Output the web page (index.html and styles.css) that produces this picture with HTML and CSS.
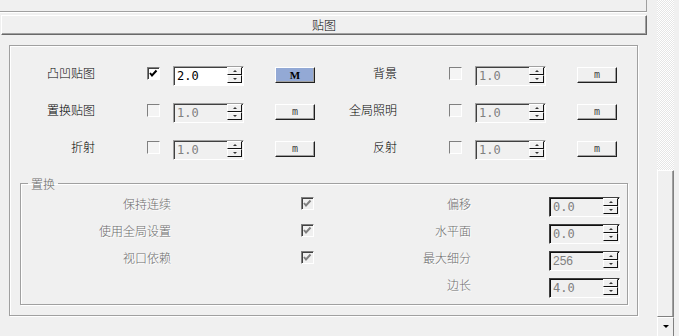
FILE: index.html
```html
<html>
  <head>
    <title>贴图</title>
    <link rel="stylesheet" href="styles.css">
  </head>
  <body>
  <div class="wrap">
    <div class="main">
      <div class="prev"></div>
      <div class="rollout">贴图</div>
      <div class="group">
        <div class="maps">
          <div class="field">
            <span class="lbl">凸凹贴图</span>
            <span class="cb on"><svg width="11" height="11" viewBox="0 0 11 11"><polyline points="2,5 4,7.5 8.5,2.5" fill="none" stroke="#000" stroke-width="2"/></svg></span>
            <span class="spin on"><span class="val">2.0</span><span class="arrows"><i class="up"></i><i class="dn"></i></span></span>
            <span class="mbtn act">M</span>
          </div>
          <div class="field">
            <span class="lbl">背景</span>
            <span class="cb"></span>
            <span class="spin"><span class="val">1.0</span><span class="arrows"><i class="up"></i><i class="dn"></i></span></span>
            <span class="mbtn">m</span>
          </div>
          <div class="field">
            <span class="lbl">置换贴图</span>
            <span class="cb"></span>
            <span class="spin"><span class="val">1.0</span><span class="arrows"><i class="up"></i><i class="dn"></i></span></span>
            <span class="mbtn">m</span>
          </div>
          <div class="field">
            <span class="lbl">全局照明</span>
            <span class="cb"></span>
            <span class="spin"><span class="val">1.0</span><span class="arrows"><i class="up"></i><i class="dn"></i></span></span>
            <span class="mbtn">m</span>
          </div>
          <div class="field">
            <span class="lbl">折射</span>
            <span class="cb"></span>
            <span class="spin"><span class="val">1.0</span><span class="arrows"><i class="up"></i><i class="dn"></i></span></span>
            <span class="mbtn">m</span>
          </div>
          <div class="field">
            <span class="lbl">反射</span>
            <span class="cb"></span>
            <span class="spin"><span class="val">1.0</span><span class="arrows"><i class="up"></i><i class="dn"></i></span></span>
            <span class="mbtn">m</span>
          </div>
        </div>

        <fieldset class="disp">
          <legend>置换</legend>
          <div class="dgrid">
            <span class="dl">保持连续</span>
            <span class="cb dis"><svg width="11" height="11" viewBox="0 0 11 11"><polyline points="2,5 4,7.5 8.5,2.5" fill="none" stroke="#808080" stroke-width="2"/></svg></span>
            <span class="dl">偏移</span>
            <span class="spin dark"><span class="val">0.0</span><span class="arrows"><i class="up"></i><i class="dn"></i></span></span>

            <span class="dl">使用全局设置</span>
            <span class="cb dis"><svg width="11" height="11" viewBox="0 0 11 11"><polyline points="2,5 4,7.5 8.5,2.5" fill="none" stroke="#808080" stroke-width="2"/></svg></span>
            <span class="dl">水平面</span>
            <span class="spin dark"><span class="val">0.0</span><span class="arrows"><i class="up"></i><i class="dn"></i></span></span>

            <span class="dl">视口依赖</span>
            <span class="cb dis"><svg width="11" height="11" viewBox="0 0 11 11"><polyline points="2,5 4,7.5 8.5,2.5" fill="none" stroke="#808080" stroke-width="2"/></svg></span>
            <span class="dl">最大细分</span>
            <span class="spin dark"><span class="val num">256</span><span class="arrows"><i class="up"></i><i class="dn"></i></span></span>

            <span class="dl"></span>
            <span></span>
            <span class="dl">边长</span>
            <span class="spin dark"><span class="val">4.0</span><span class="arrows"><i class="up"></i><i class="dn"></i></span></span>
          </div>
        </fieldset>
      </div>
    </div>
    <div class="gutter"></div>
    <div class="sbar">
      <div class="track"></div>
      <div class="thumb"></div>
      <div class="down"><i></i></div>
    </div>
  </div>
  </body>
</html>
```
FILE: styles.css
```css
BODY { margin: 0; background: #f0f0f0; font-family: "Noto Sans CJK SC", sans-serif; font-size: 12px; font-weight: 300; color: #000; }
.wrap { display: flex; height: 336px; overflow: hidden; }
.main { width: 647px; flex: none; }
.gutter { width: 10px; flex: none; }

.prev { height: 11px; border-bottom: 1px solid #a0a0a0; border-right: 1px solid #a0a0a0; box-shadow: 0 1px #fff; }
.rollout { margin: 3px 0 0 1px; height: 20px; box-sizing: border-box; border: 1px solid; border-color: #fff #696969 #696969 #fff; box-shadow: inset -1px -1px #a0a0a0; text-align: center; line-height: 17px; }

.group { margin: 10px 9px 0 9px; height: 271px; box-sizing: border-box; border: 1px solid #a0a0a0; box-shadow: inset 1px 1px #fff, 1px 1px #fff; padding-top: 20px; }
.maps { display: grid; grid-template-columns: 302px 305px; row-gap: 17px; }
.field { display: flex; align-items: flex-start; height: 20px; }
.lbl { width: 85px; flex: none; text-align: right; line-height: 14px; }

.cb { width: 13px; height: 13px; box-sizing: border-box; flex: none; border: 1px solid; border-color: #808080 #fff #fff #808080; background: #f4f4f4; }
.cb svg { display: block; }
.field .cb { margin: 1px 0 0 52px; }
.cb.on { background: #fff; box-shadow: inset 1px 1px #404040; }
.cb.dis { background: #f0f0f0; box-shadow: inset 1px 1px #404040; }

.spin { width: 71px; height: 20px; box-sizing: border-box; flex: none; display: flex; align-items: flex-start; border: 1px solid; border-color: #a0a0a0 #fff #fff #a0a0a0; background: #f0f0f0; box-shadow: inset 1px 1px #404040; }
.field .spin { margin-left: 13px; }
.spin.on { background: #fff; }
.spin.dark { border-color: #404040 #fff #fff #404040; box-shadow: inset 1px 1px #101010; }
.val { padding-left: 3px; font-family: "DejaVu Sans Mono", monospace; font-size: 12px; font-weight: normal; line-height: 18px; color: #808080; }
.spin.on .val { color: #000; }
.val.num { font-family: "Liberation Sans", sans-serif; }
.arrows { margin: 0 1px 0 auto; width: 15px; display: flex; flex-direction: column; }
.arrows i { height: 8px; box-sizing: border-box; border: 1px solid; border-color: #fff #101010 #101010 #fff; background: #f0f0f0; display: flex; justify-content: center; align-items: center; }
.arrows i::after { content: ""; border-left: 2px solid transparent; border-right: 2px solid transparent; }
.arrows .up::after { border-bottom: 2px solid #333; }
.arrows .dn::after { border-top: 2px solid #333; }

.mbtn { margin: 1px 0 0 31px; width: 40px; height: 16px; box-sizing: border-box; flex: none; border: 1px solid; border-color: #fff #202020 #202020 #fff; box-shadow: inset -1px -1px #a0a0a0; background: #f0f0f0; text-align: center; font-family: "DejaVu Sans Mono", monospace; font-size: 10px; font-weight: normal; line-height: 14px; color: #404040; }
.mbtn.act { background: #93a9d5; font-family: "Liberation Serif", serif; font-weight: bold; font-size: 11px; color: #000; }

.disp { margin: 17px 9px 0 10px; padding: 0 0 6px 0; min-width: 0; border: 1px solid #a0a0a0; box-shadow: inset 1px 1px #fff, 1px 1px #fff; }
.disp legend { margin-left: 7px; padding: 0 3px; line-height: 13px; color: #6d6d6d; }
.dgrid { display: grid; grid-template-columns: 150px 143px 157px 149px; grid-auto-rows: 20px; row-gap: 7px; padding-top: 7px; }
.dl { text-align: right; line-height: 14px; color: #6d6d6d; text-shadow: 1px 1px #fff; }
.dgrid .cb, .dgrid .spin { justify-self: end; }

.sbar { width: 17px; flex: none; display: flex; flex-direction: column; }
.track { height: 170px; background: repeating-conic-gradient(#fff 0 25%, #e6e6e6 0 50%) 0 0/2px 2px; }
.thumb { height: 147px; box-sizing: border-box; border: 1px solid; border-color: #fff #808080 #808080 #fff; box-shadow: inset -1px 0 #a0a0a0; }
.down { height: 19px; box-sizing: border-box; border-top: 1px solid #fff; border-left: 1px solid #fff; border-right: 1px solid #808080; display: flex; justify-content: center; padding-top: 7px; }
.down i { width: 0; height: 0; border-left: 3px solid transparent; border-right: 3px solid transparent; border-top: 3px solid #000; }
```
